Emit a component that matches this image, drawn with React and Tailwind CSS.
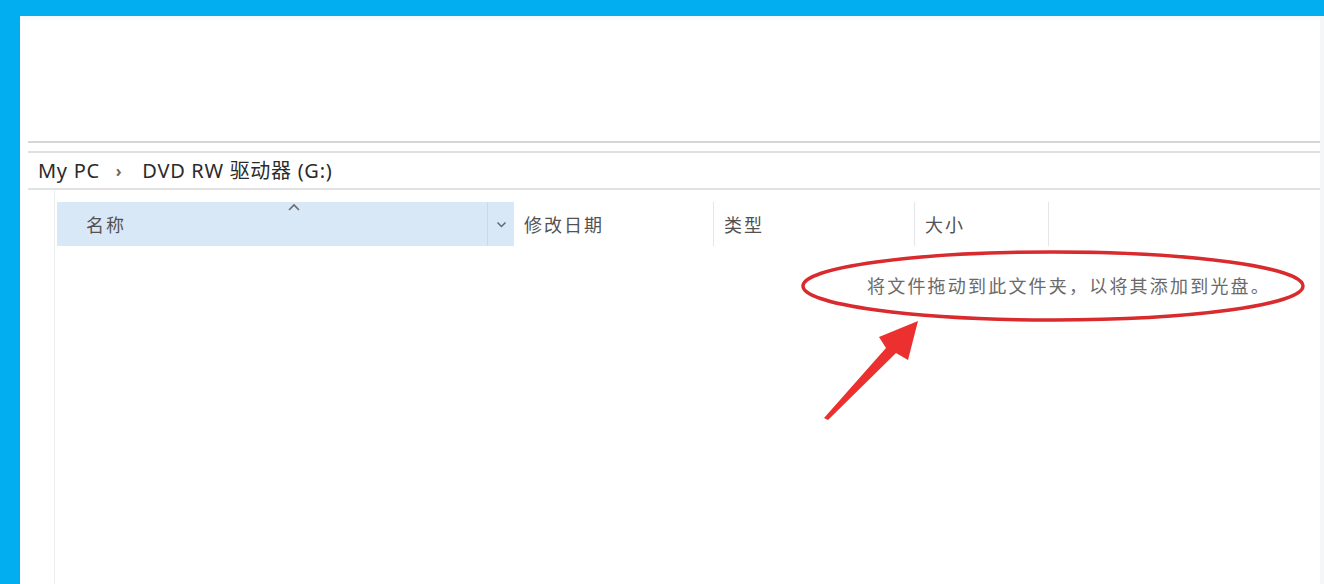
import React from "react";

const font = { fontFamily: "'Segoe UI','Noto Sans','Noto Sans CJK SC',sans-serif" };

export default function App() {
  return (
    <div
      className="relative w-[1324px] h-[584px] overflow-hidden bg-[#02aeef] flex pt-[16px] pl-[20px]"
      style={font}
    >
      <div className="flex-1 flex flex-col bg-white border-r-4 border-[#f4f6f7]">
        {/* ribbon blank area */}
        <div className="h-[125px] shrink-0 border-t-4 border-[#f7fbfd]" />
        <div className="ml-[8px] h-[2px] bg-[#d6d6d6] shrink-0" />
        <div className="ml-[8px] h-[8px] shrink-0" />
        <div className="ml-[8px] h-[2px] bg-[#e0e0e0] shrink-0" />
        {/* breadcrumb */}
        <div className="ml-[8px] h-[35px] shrink-0 flex items-center pl-[10px] text-[20px] tracking-[0.7px] text-[#2b2b2b]">
          <span>My PC</span>
          <span className="ml-[16px] mr-[20px] text-[16px] font-bold text-[#6a6a6a]">›</span>
          <span>DVD RW 驱动器 (G:)</span>
        </div>
        <div className="ml-[8px] h-[2px] bg-[#e2e2e2] shrink-0" />
        {/* content */}
        <div className="flex-1 flex">
          <div className="w-[35px] shrink-0 border-r border-[#efefef]" />
          <div className="flex-1 flex flex-col pl-[2px] pt-[12px]">
            {/* column header */}
            <div className="flex h-[44px] text-[18px] tracking-[2px] text-[#525252]">
              <div className="relative w-[430px] bg-[#d9e8f6] flex items-center pl-[29px] pt-[2px]">
                名称
                <svg
                  className="absolute left-[230px] top-[1px]"
                  width="14"
                  height="9"
                  viewBox="0 0 14 9"
                >
                  <path d="M2 7 L7 2 L12 7" fill="none" stroke="#6b6b6b" strokeWidth="1.6" />
                </svg>
              </div>
              <div className="w-[27px] bg-[#d9e8f6] border-l border-[#c6daee] flex items-center justify-center">
                <svg width="11" height="7" viewBox="0 0 11 7">
                  <path d="M1.5 1.5 L5.5 5.5 L9.5 1.5" fill="none" stroke="#5a6a7a" strokeWidth="1.5" />
                </svg>
              </div>
              <div className="w-[200px] flex items-center pl-[10px] pt-[2px] border-r border-[#e6e6e6]">
                修改日期
              </div>
              <div className="w-[201px] flex items-center pl-[10px] pt-[2px] border-r border-[#e6e6e6]">
                类型
              </div>
              <div className="w-[134px] flex items-center pl-[10px] pt-[2px] border-r border-[#e6e6e6]">
                大小
              </div>
            </div>
            {/* empty message */}
            <div className="ml-[810px] mt-[28px] text-[18px] tracking-[2.2px] text-[#6a6a6a] leading-[24px]">
              将文件拖动到此文件夹，以将其添加到光盘。
            </div>
          </div>
        </div>
      </div>

      {/* annotation overlay */}
      <svg
        className="absolute left-0 top-0 pointer-events-none"
        width="1324"
        height="584"
        viewBox="0 0 1324 584"
      >
        <ellipse cx="1053" cy="286" rx="250" ry="34" fill="none" stroke="#d92a2e" strokeWidth="3.5" />
        <polygon
          points="824,418 886,348 879,337 918,321 908,360 896,353 828,420"
          fill="#ec2f2f"
        />
      </svg>
    </div>
  );
}
